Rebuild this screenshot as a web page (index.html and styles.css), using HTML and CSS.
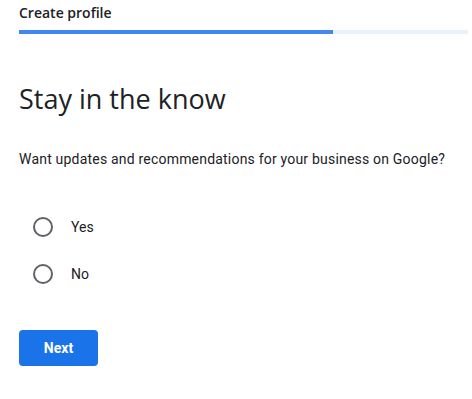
FILE: index.html
```html
<!DOCTYPE html>
<html>
<head>
    <meta charset="UTF-8">
    <title>Create profile</title>
    <link rel="stylesheet" href="styles.css">
</head>
<body>
    <div class="header">
        <div class="title">Create profile</div>
        <div class="progress"><div class="progress_fill" style="width: 70%;"></div></div>
    </div>
    <div class="content">
        <h1>Stay in the know</h1>
        <p class="question">Want updates and recommendations for your business on Google?</p>
        <div class="options">
            <label class="option">
                <input type="radio" name="updates" value="yes">
                <span class="radio"></span>
                <span class="label">Yes</span>
            </label>
            <label class="option">
                <input type="radio" name="updates" value="no">
                <span class="radio"></span>
                <span class="label">No</span>
            </label>
        </div>
        <button class="next">Next</button>
    </div>
</body>
</html>
```

FILE: styles.css
```css
html,
body {
    height: 100%;
}
body {
    margin: 0;
    background: #fff;
    color: #202124;
    font-family: Roboto, "Noto Sans", sans-serif;
    overflow: hidden;
}
.header {
    padding: 3px 4px 0 19px;
}
.title {
    font-family: "Open Sans", sans-serif;
    font-size: 14px;
    font-weight: 600;
    line-height: 19px;
    color: #202124;
}
.progress {
    margin-top: 8px;
    height: 4px;
    background-color: #e8f0fe;
}
.progress_fill {
    height: 100%;
    background-color: #4285f4;
}
.content {
    padding: 0 19px;
}
h1 {
    margin: 47px 0 0;
    font-family: "Open Sans", sans-serif;
    font-size: 27px;
    font-weight: 400;
    line-height: 36px;
    color: #202124;
}
.question {
    margin: 32px 0 0;
    font-size: 14px;
    letter-spacing: 0.2px;
    line-height: 20px;
}
.options {
    display: flex;
    flex-direction: column;
    gap: 27px;
    margin-top: 48px;
    padding-left: 14px;
}
.option {
    display: flex;
    align-items: center;
    gap: 18px;
    font-size: 14px;
    line-height: 20px;
    cursor: pointer;
}

/* Hide default radio */
.option input {
    display: none;
}
.radio {
    box-sizing: border-box;
    width: 20px;
    height: 20px;
    border: 2px solid #5f6368;
    border-radius: 50%;
}
.next {
    margin-top: 46px;
    width: 79px;
    height: 36px;
    border: none;
    border-radius: 4px;
    background-color: #1a73e8;
    color: #fff;
    font-family: Roboto, sans-serif;
    font-size: 14px;
    font-weight: 700;
    cursor: pointer;
}
```
